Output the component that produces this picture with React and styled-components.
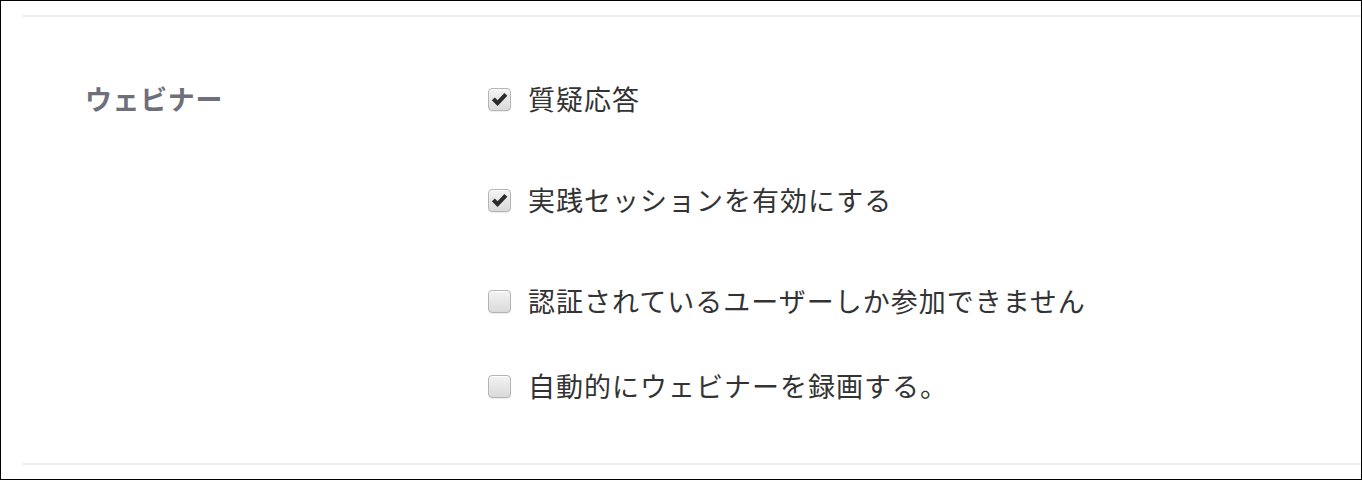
import React from "react";
import styled, { createGlobalStyle } from "styled-components";

const GlobalStyle = createGlobalStyle`
  html, body {
    margin: 0;
    padding: 0;
    background: #fff;
  }
  body {
    font-family: "Noto Sans CJK JP", "Noto Sans", sans-serif;
    color: #333;
  }
`;

const options = [
  { label: "質疑応答", checked: true, gap: 0 },
  { label: "実践セッションを有効にする", checked: true, gap: 65 },
  { label: "認証されているユーザーしか参加できません", checked: false, gap: 65 },
  { label: "自動的にウェビナーを録画する。", checked: false, gap: 49 }
];

const Frame = styled.div`
  box-sizing: border-box;
  width: 1362px;
  height: 480px;
  border: 1px solid #000;
  padding: 14px 0 0 22px;
  overflow: hidden;
`;

const Section = styled.div`
  display: flex;
  border-top: 2px solid #ededed;
  border-bottom: 2px solid #ededed;
  padding: 64px 0 59px 62px;
`;

const Title = styled.div`
  width: 403px;
  flex-shrink: 0;
  font-size: 27px;
  letter-spacing: 0.6px;
  font-weight: 700;
  color: #6f6f7b;
  line-height: 36px;
`;

const OptionList = styled.div`
  display: flex;
  flex-direction: column;
`;

const Option = styled.label`
  display: flex;
  align-items: center;
  gap: 17px;
  height: 36px;
  margin-top: ${p => p.$gap}px;
  font-size: 27px;
  letter-spacing: 1px;
  line-height: 36px;
  color: #333;
`;

const Box = styled.span`
  box-sizing: border-box;
  width: 23px;
  height: 23px;
  border: 1px solid #b4b4b4;
  border-radius: 4px;
  background: linear-gradient(#f3f3f3, #dadada);
  box-shadow: inset 0 1px 0 #fff, 0 1px 1px rgba(0, 0, 0, 0.08);
  display: flex;
  align-items: center;
  justify-content: center;
  flex-shrink: 0;
`;

const Check = () => (
  <svg width="17" height="15" viewBox="0 0 16 14">
    <path
      d="M0.8 7.6 L3.6 5 L6.2 7.6 L12.6 0.8 L15.4 3.4 L6.2 13 Z"
      fill="#2b2b2b"
    />
  </svg>
);

export default function App() {
  return (
    <>
      <GlobalStyle />
      <Frame>
        <Section>
          <Title>ウェビナー</Title>
          <OptionList>
            {options.map(o => (
              <Option key={o.label} $gap={o.gap}>
                <Box>{o.checked && <Check />}</Box>
                {o.label}
              </Option>
            ))}
          </OptionList>
        </Section>
      </Frame>
    </>
  );
}
